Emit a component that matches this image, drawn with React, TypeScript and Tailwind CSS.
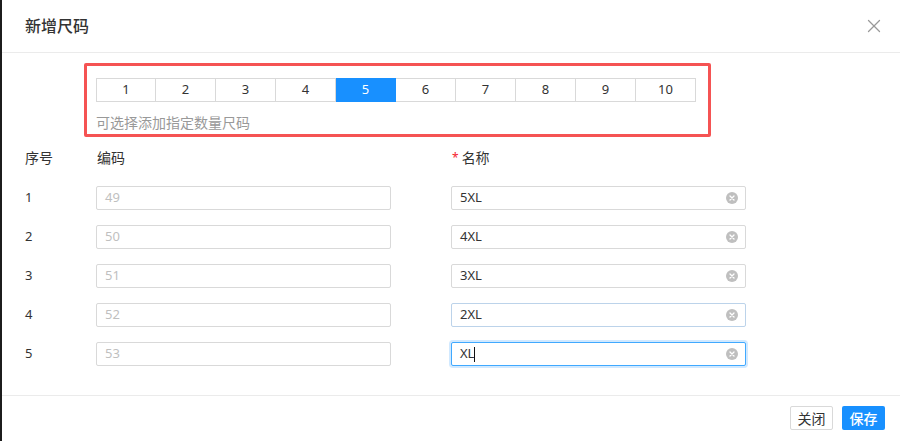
import { X } from 'lucide-react'

const sizes = [1, 2, 3, 4, 5, 6, 7, 8, 9, 10]

const rows = [
  { seq: 1, code: '49', name: '5XL', state: 'idle' },
  { seq: 2, code: '50', name: '4XL', state: 'idle' },
  { seq: 3, code: '51', name: '3XL', state: 'idle' },
  { seq: 4, code: '52', name: '2XL', state: 'hover' },
  { seq: 5, code: '53', name: 'XL', state: 'focus' }
]

const font = { fontFamily: '"Noto Sans", "Noto Sans CJK SC", sans-serif' }

function ClearIcon() {
  return (
    <svg width="12" height="12" viewBox="0 0 12 12" className="shrink-0">
      <circle cx="6" cy="6" r="6" fill="#bfbfbf" />
      <path d="M4 4 L8 8 M8 4 L4 8" stroke="#fff" strokeWidth="1.3" strokeLinecap="round" />
    </svg>
  )
}

function NameInput({ value, state }: { value: string; state: string }) {
  const border =
    state === 'focus'
      ? 'border-[#40a9ff] shadow-[0_0_0_2px_rgba(24,144,255,0.2)]'
      : state === 'hover'
        ? 'border-[#bcd3ea]'
        : 'border-[#d9d9d9]'
  return (
    <div className={`w-[295px] h-[24px] rounded-[2px] border bg-white flex items-center pl-[8px] pr-[7px] ${border}`}>
      <span className="flex-1 flex items-center text-[13px] text-[#333]">
        {value}
        {state === 'focus' && <span className="inline-block w-px h-[15px] bg-[#111]" />}
      </span>
      <ClearIcon />
    </div>
  )
}

export default function App() {
  return (
    <div className="w-[900px] h-[441px] flex bg-[#1c1c1c] overflow-hidden" style={font}>
      <div className="w-[2px] shrink-0" />
      <div className="flex-1 bg-white flex flex-col">
        {/* 标题栏 */}
        <div className="h-[53px] shrink-0 border-b border-[#ebebeb] flex items-center justify-between pl-[23px] pr-[15px]">
          <span className="text-[16px] font-medium text-[#333]">新增尺码</span>
          <X size={22} strokeWidth={1.4} className="text-[#999]" />
        </div>

        {/* 内容 */}
        <div className="h-[342px] shrink-0 pl-[23px]">
          <div className="ml-[59px] mt-[10px] w-[627px] border-[3px] border-[#f55353] rounded-[2px] pl-[9px] pt-[12px] pb-[1px]">
            <div className="flex">
              {sizes.map((n, i) => (
                <div
                  key={n}
                  className={`w-[60px] h-[24px] flex items-center justify-center text-[13px] border-y border-r ${
                    i === 0 ? 'border-l' : ''
                  } ${n === 5 ? 'bg-[#1890ff] border-[#1890ff] text-white' : 'border-[#d9d9d9] text-[#333]'}`}
                >
                  {n}
                </div>
              ))}
            </div>
            <div className="mt-[11px] leading-[20px] text-[14px] text-[#999]">可选择添加指定数量尺码</div>
          </div>

          <div className="mt-[11px] flex items-center leading-[20px] text-[14px] text-[#333]">
            <span className="w-[72px]">序号</span>
            <span className="w-[355px]">编码</span>
            <span className="flex items-center">
              <span className="text-[#f5222d] mr-[3px] text-[12px]">*</span>名称
            </span>
          </div>

          <div className="mt-[18px] flex flex-col gap-[15px]">
            {rows.map((r) => (
              <div key={r.seq} className="flex items-center">
                <span className="w-[71px] text-[13px] text-[#333]">{r.seq}</span>
                <div className="w-[295px] h-[24px] rounded-[2px] border border-[#d9d9d9] bg-white flex items-center pl-[8px] text-[13px] text-[#bfbfbf]">
                  {r.code}
                </div>
                <div className="w-[60px]" />
                <NameInput value={r.name} state={r.state} />
              </div>
            ))}
          </div>
        </div>

        {/* 底部 */}
        <div className="flex-1 border-t border-[#ebebeb] flex justify-end items-start pt-[10px] pr-[15px] gap-[9px]">
          <button className="w-[43px] h-[24px] rounded-[2px] border border-[#d9d9d9] bg-white text-[14px] text-[#333]">
            关闭
          </button>
          <button className="w-[43px] h-[24px] rounded-[2px] bg-[#1890ff] text-[14px] text-white font-medium">
            保存
          </button>
        </div>
      </div>
    </div>
  )
}
